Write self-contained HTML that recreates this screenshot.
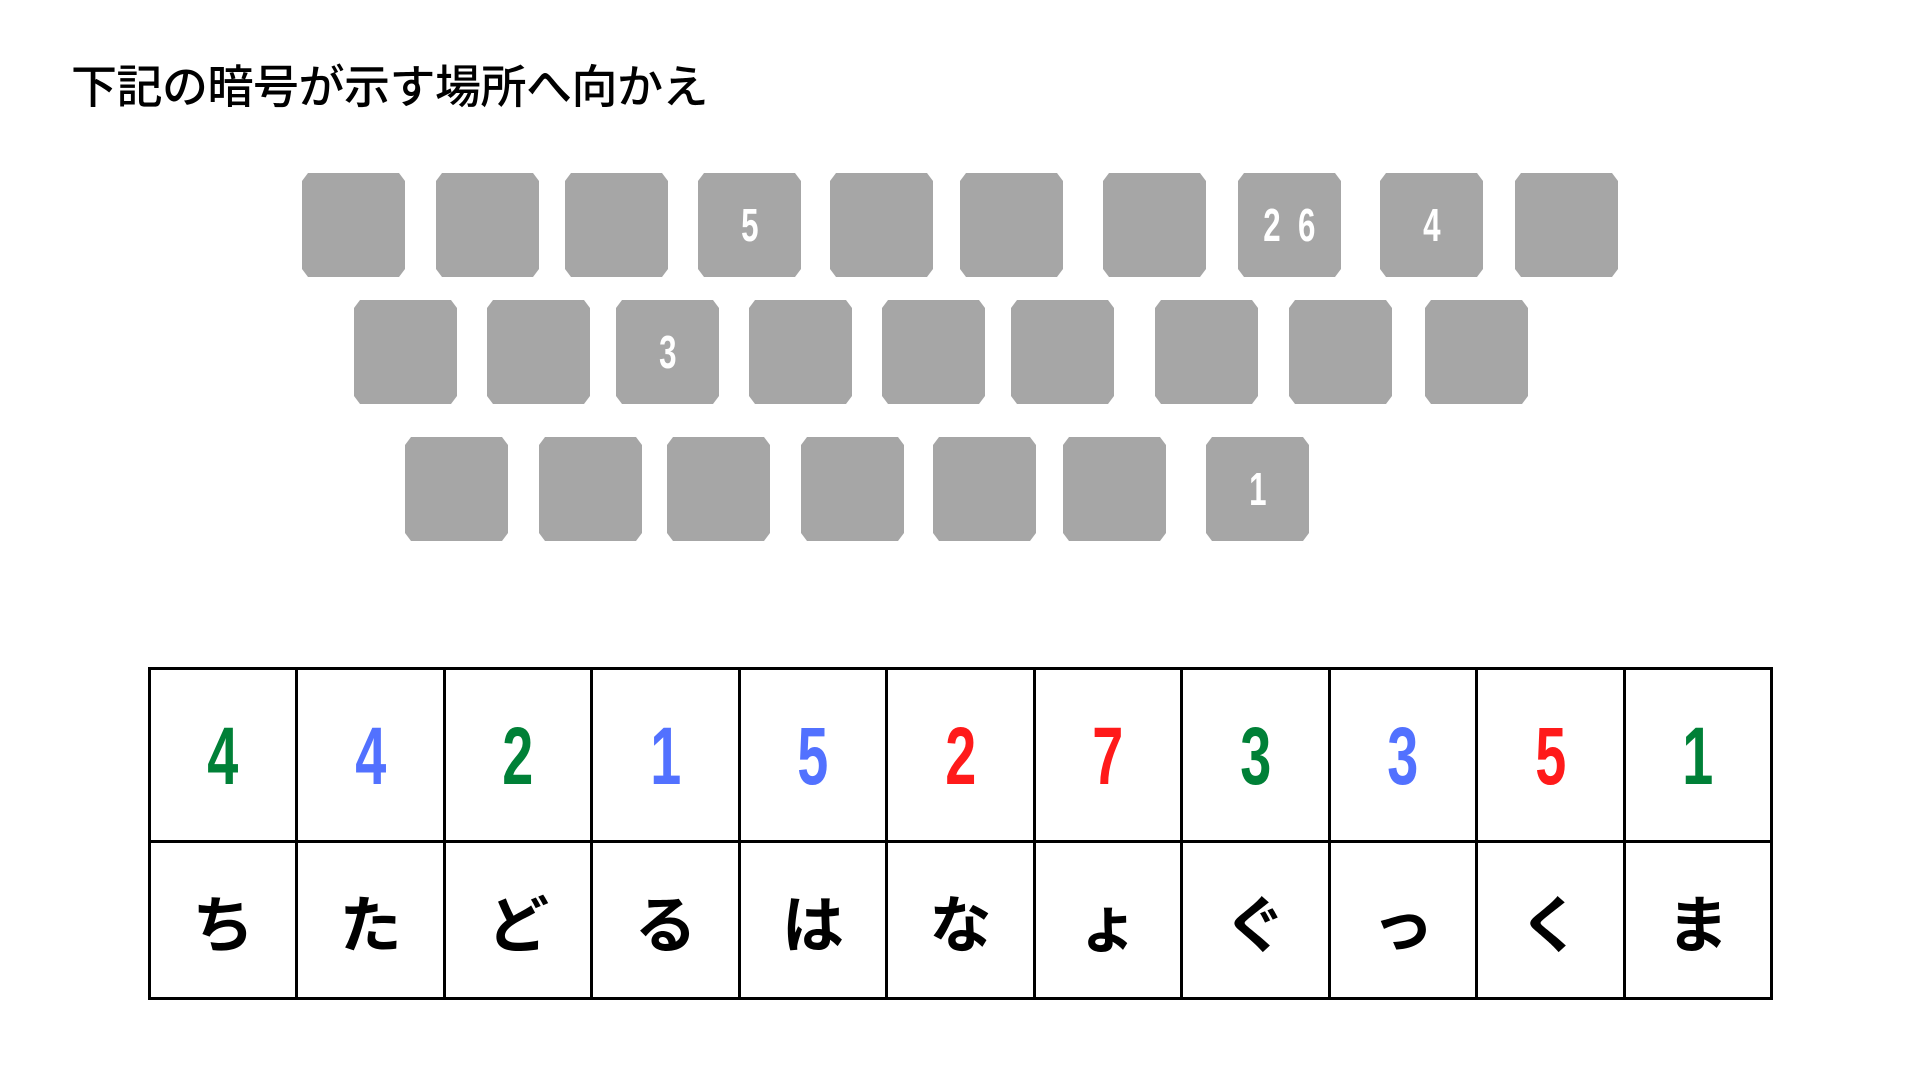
<!DOCTYPE html>
<html><head><meta charset="utf-8"><style>
body{margin:0;width:1920px;height:1080px;background:#fff;position:relative;overflow:hidden;font-family:"Liberation Sans","Noto Sans CJK JP",sans-serif}
.t{position:absolute;left:71px;top:54px;font-size:46px;line-height:60px;color:#000;font-family:"Noto Sans CJK JP",sans-serif;font-weight:500;letter-spacing:-0.5px}
.k{position:absolute;width:103px;height:104px;background:#a6a6a6;clip-path:polygon(6px 0,97px 0,103px 8px,103px 96px,97px 104px,6px 104px,0 96px,0 8px);color:#fff;font-weight:bold;font-size:46px;line-height:104px;text-align:center}
.k span,td span{display:inline-block;transform:scaleX(.68)}
table{position:absolute;left:148px;top:667px;width:1625px;height:333px;border-collapse:collapse;table-layout:fixed}
td{border:3px solid #000;text-align:center;padding:0}
tr.n td{height:166px;font-weight:bold;font-size:82px;padding-top:4px}
tr.h td{font-family:"Noto Sans CJK JP",sans-serif;font-weight:bold;font-size:62px;color:#000}
tr.h td span{transform:none}
.g{color:#008037}.b{color:#5271ff}.r{color:#ff1a1a}
</style></head><body>
<div class="t">下記の暗号が示す場所へ向かえ</div>
<div class="k" style="left:302px;top:173px"></div>
<div class="k" style="left:436px;top:173px"></div>
<div class="k" style="left:565px;top:173px"></div>
<div class="k" style="left:698px;top:173px"><span>5</span></div>
<div class="k" style="left:830px;top:173px"></div>
<div class="k" style="left:960px;top:173px"></div>
<div class="k" style="left:1103px;top:173px"></div>
<div class="k" style="left:1238px;top:173px"><span>2&nbsp;&nbsp;6</span></div>
<div class="k" style="left:1380px;top:173px"><span>4</span></div>
<div class="k" style="left:1515px;top:173px"></div>
<div class="k" style="left:354px;top:300px"></div>
<div class="k" style="left:487px;top:300px"></div>
<div class="k" style="left:616px;top:300px"><span>3</span></div>
<div class="k" style="left:749px;top:300px"></div>
<div class="k" style="left:882px;top:300px"></div>
<div class="k" style="left:1011px;top:300px"></div>
<div class="k" style="left:1155px;top:300px"></div>
<div class="k" style="left:1289px;top:300px"></div>
<div class="k" style="left:1425px;top:300px"></div>
<div class="k" style="left:405px;top:437px"></div>
<div class="k" style="left:539px;top:437px"></div>
<div class="k" style="left:667px;top:437px"></div>
<div class="k" style="left:801px;top:437px"></div>
<div class="k" style="left:933px;top:437px"></div>
<div class="k" style="left:1063px;top:437px"></div>
<div class="k" style="left:1206px;top:437px"><span>1</span></div>
<table>
<tr class="n"><td class="g"><span>4</span></td><td class="b"><span>4</span></td><td class="g"><span>2</span></td><td class="b"><span>1</span></td><td class="b"><span>5</span></td><td class="r"><span>2</span></td><td class="r"><span>7</span></td><td class="g"><span>3</span></td><td class="b"><span>3</span></td><td class="r"><span>5</span></td><td class="g"><span>1</span></td></tr>
<tr class="h"><td>ち</td><td>た</td><td>ど</td><td>る</td><td>は</td><td>な</td><td>ょ</td><td>ぐ</td><td>っ</td><td>く</td><td>ま</td></tr>
</table>
</body></html>
